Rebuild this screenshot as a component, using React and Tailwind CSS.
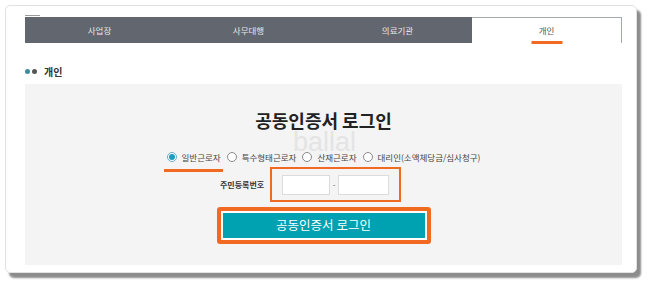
import React from "react";

const KR = { fontFamily: '"Noto Sans CJK KR", "Noto Sans", sans-serif' };

const Radio = ({ checked, label, marked }) => (
  <label className="relative flex items-center gap-[5px] text-[8.5px] text-[#444] leading-none">
    {checked ? (
      <span className="flex h-[10px] w-[10px] items-center justify-center rounded-full border border-[#6aa9c8] bg-white">
        <span className="h-[6px] w-[6px] rounded-full bg-[#1c9cc0]" />
      </span>
    ) : (
      <span className="h-[10px] w-[10px] rounded-full border border-[#8a8a8a] bg-white" />
    )}
    <span>{label}</span>
    {marked && (
      <span className="absolute left-[-3px] right-[-2px] top-[17px] h-[3px] bg-[#f26a21]" />
    )}
  </label>
);

export default function App() {
  const tabs = ["사업장", "사무대행", "의료기관"];

  return (
    <div className="relative h-[287px] w-[650px] overflow-hidden bg-white pl-[5px] pt-[5px]" style={KR}>
      {/* 카드 */}
      <div className="flex h-[268px] w-[632px] flex-col rounded-[5px] border border-[#e2e2e2] bg-white pl-[19px] shadow-[4px_5px_2px_rgba(0,0,0,0.45)]">
        <div className="mt-[9px] h-px w-[15px] bg-[#9a9a9a]" />

        {/* 탭 */}
        <div className="mt-px flex h-[26px] w-[597px]">
          {tabs.map((t) => (
            <div
              key={t}
              className="flex flex-1 items-center justify-center bg-[#62666f] text-[8.5px] text-[#e6e6e6]"
            >
              {t}
            </div>
          ))}
          <div className="relative flex flex-1 items-center justify-center border-r border-t border-[#a3a9b0] bg-white text-[8.5px] text-[#555]">
            개인
            <span className="absolute bottom-[-1px] left-1/2 h-[3px] w-[31px] -translate-x-1/2 bg-[#f26a21]" />
          </div>
        </div>

        {/* 섹션 제목 */}
        <div className="mt-[22px] flex h-[12px] items-center gap-[2px]">
          <span className="h-[5px] w-[5px] rounded-full bg-[#3f8c99]" />
          <span className="h-[5px] w-[5px] rounded-full bg-[#555]" />
          <span className="ml-[5px] text-[10px] font-bold text-[#333]">개인</span>
        </div>

        {/* 로그인 패널 */}
        <div className="mt-[7px] flex h-[181px] w-[597px] flex-col items-center bg-[#f4f4f4]">
          <h2 className="mt-[25px] text-[18px] font-bold leading-[22px] text-[#222]">공동인증서 로그인</h2>

          <div className="mt-[20px] flex h-[12px] items-center gap-[6px]">
            <Radio checked marked label="일반근로자" />
            <Radio label="특수형태근로자" />
            <Radio label="산재근로자" />
            <Radio label="대리인(소액체당금/심사청구)" />
          </div>

          <div className="mt-[4px] flex items-center gap-[6px] self-start pl-[195px]">
            <span className="text-[8px] font-bold text-[#333]">주민등록번호</span>
            <div className="flex h-[35px] w-[131px] items-center border-2 border-[#f26a21] pl-[10px]">
              <div className="h-[20px] w-[48px] border border-[#dcdcdc] bg-white" />
              <span className="w-[8px] text-center text-[8px] text-[#666]">-</span>
              <div className="h-[20px] w-[51px] border border-[#dcdcdc] bg-white" />
            </div>
          </div>

          <div className="mt-[5px] rounded-[3px] border-4 border-[#f26a21] bg-white p-[2px]">
            <button className="flex h-[25px] w-[202px] items-center justify-center bg-[#00a2b2] text-[12.5px] text-white">
              공동인증서 로그인
            </button>
          </div>
        </div>
      </div>

      {/* 워터마크 */}
      <span
        className="pointer-events-none absolute left-[293px] top-[132px] text-[27px] leading-[20px] text-[#e4e4e4]"
        style={{ fontFamily: '"Liberation Sans", Arial, sans-serif' }}
      >
        ballal
      </span>
    </div>
  );
}
